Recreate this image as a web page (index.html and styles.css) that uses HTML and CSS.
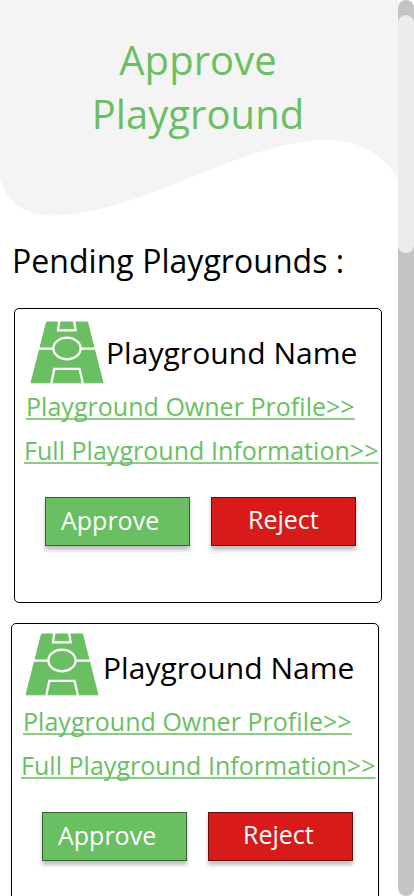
FILE: index.html
```
<!DOCTYPE html>
<html lang="en">
<head>
<meta charset="utf-8">
<title>Approve Playground</title>
<link rel="stylesheet" href="styles.css">
</head>
<body>
<svg class="defs" width="0" height="0" aria-hidden="true">
  <symbol id="pitch" viewBox="0 0 74 63">
    <path fill="#6abf62" stroke="#6abf62" stroke-linejoin="round" d="M16.5 1H57.5L73 61.8H1Z"/>
    <path fill="none" stroke="#fff" stroke-width="2.300" d="M29.300 0L28 9.300H45.600L44.200 0M0 27.600H23.500M50.500 27.600H74M21.200 63L24.300 47.800H49.500L53 63"/>
    <ellipse cx="37" cy="27.500" rx="13.600" ry="10.800" fill="none" stroke="#fff" stroke-width="2.300"/>
  </symbol>
</svg>
<div class="screen">
  <main class="content">
    <header class="hero">
      <svg class="wave" width="398" height="220" viewBox="0 0 398 220" aria-hidden="true"><path fill="#f4f4f4" d="M0 0H398V180C388 160 365 140 328 140C240 140 140 215.500 53 215.500C24 215.500 7 202 0 179Z"/></svg>
      <h1 class="title">Approve<br>Playground</h1>
    </header>
    <h2 class="pending">Pending Playgrounds :</h2>
    <section class="card">
      <div class="head"><svg class="icon"><use href="#pitch"/></svg><h3 class="name">Playground Name</h3></div>
      <a class="link owner">Playground Owner Profile&gt;&gt;</a>
      <a class="link info">Full Playground Information&gt;&gt;</a>
      <div class="actions"><button class="btn approve">Approve</button><button class="btn reject">Reject</button></div>
    </section>
    <section class="card second">
      <div class="head"><svg class="icon"><use href="#pitch"/></svg><h3 class="name">Playground Name</h3></div>
      <a class="link owner">Playground Owner Profile&gt;&gt;</a>
      <a class="link info">Full Playground Information&gt;&gt;</a>
      <div class="actions"><button class="btn approve">Approve</button><button class="btn reject">Reject</button></div>
    </section>
  </main>
  <div class="track"><div class="thumb"></div></div>
</div>
</body>
</html>
```
FILE: styles.css
```
* { box-sizing: border-box; }
body { margin: 0; overflow: hidden; background: #fff; color: #000; font-family: "Open Sans", sans-serif; }
h1, h2, h3 { margin: 0; font-weight: 400; white-space: nowrap; }
.defs { position: absolute; }
.screen { display: flex; width: 414px; height: 896px; overflow: hidden; }
.content { width: 398px; height: 896px; overflow: hidden; }
.hero { position: relative; height: 220px; padding: 33px 2px 0 0; }
.wave { position: absolute; left: 0; top: 0; }
.title { position: relative; font-size: 40px; line-height: 54px; letter-spacing: .05px; text-align: center; color: #6abf62; }
.pending { margin: 19px 0 0 12px; height: 69px; font-size: 32px; line-height: 44px; letter-spacing: .04px; }
.card { width: 368px; height: 295px; margin: 0 0 20px 14px; padding-top: 12px; border: 1px solid #000; border-radius: 5px; }
.second { margin-left: 11px; }
.head { display: flex; height: 64px; padding-left: 15px; }
.icon { width: 74px; height: 63px; flex: none; }
.name { margin: 12px 0 0 2px; font-size: 30px; line-height: 40px; letter-spacing: .05px; }
.link { display: block; width: max-content; height: 44px; font-size: 25px; line-height: 43px; letter-spacing: .03px; white-space: nowrap; color: #6abf62; text-decoration: underline; text-decoration-color: #89cd83; text-decoration-thickness: 2px; text-underline-offset: 2px; text-decoration-skip-ink: none; }
.owner { margin-left: 11px; }
.info { margin-left: 9px; }
.actions { display: flex; gap: 21px; margin: 24px 0 0 30px; }
.btn { width: 145px; height: 49px; padding: 0; font: 400 25px/40px "Open Sans", sans-serif; color: #fff; text-align: left; box-shadow: 0 4px 4px rgba(0,0,0,.25); border: 1px solid; border-radius: 0; }
.approve { background: #6abf62; border-color: #356031; padding: 0 0 3px 15px; }
.reject { background: #d71a1a; border-color: #6c0d0d; padding: 0 0 5px 36px; }
.second .icon { margin: -3px 2px 0 -2px; }
.second .reject { padding-left: 34px; }
.track { width: 16px; height: 896px; padding-top: 15px; border-radius: 8px; background: #c4c4c4; }
.thumb { height: 238px; border-radius: 8px; background: #ececec; }
```
